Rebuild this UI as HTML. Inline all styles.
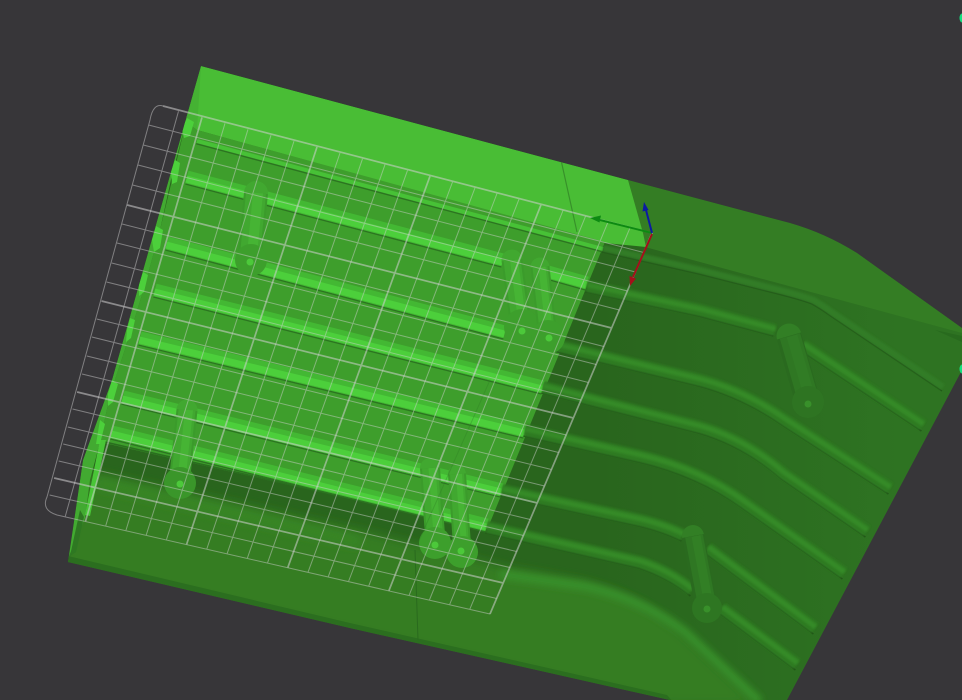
<!DOCTYPE html>
<html><head><meta charset="utf-8"><title>3D view</title>
<style>html,body{margin:0;padding:0;background:#373639;width:962px;height:700px;overflow:hidden}svg{display:block}</style>
</head><body>
<svg width="962" height="700" viewBox="0 0 962 700" xmlns="http://www.w3.org/2000/svg">
<defs>
<clipPath id="sil"><path d="M201 66L628 180L790 223Q825 233 857 253L962 328L962 370L787 700L670 700L350 628L68 562L83 460L112 380Z"/></clipPath>
<linearGradient id="floor" gradientUnits="userSpaceOnUse" x1="600" y1="0" x2="900" y2="0"><stop offset="0" stop-color="#29651d"/><stop offset="1" stop-color="#2e7322"/></linearGradient>
<filter id="b5" x="-20%" y="-20%" width="140%" height="140%"><feGaussianBlur stdDeviation="5"/></filter>
<filter id="b3" x="-20%" y="-20%" width="140%" height="140%"><feGaussianBlur stdDeviation="3.5"/></filter>
<filter id="b1" x="-5%" y="-5%" width="110%" height="110%"><feGaussianBlur stdDeviation="1"/></filter>
</defs>
<rect width="962" height="700" fill="#373639"/>
<g clip-path="url(#sil)">
<rect width="962" height="700" fill="url(#floor)"/>
<!-- bottom wall -->
<path d="M92 472L360 530L510 568L583 581Q640 595 680 632L758 705L670 705L60 565Z" fill="#347d24" filter="url(#b5)"/>
<path d="M500 574L583 586Q640 598 685 632L760 702" fill="none" stroke="#389029" stroke-width="9" filter="url(#b3)"/>
<path d="M96 482L360 542" fill="none" stroke="#378828" stroke-width="10" filter="url(#b5)"/>
<path d="M68 556L350 623L667 695L680 710L60 570Z" fill="#2b6e1f"/>
<!-- upper right band -->
<path d="M628 180L790 223Q825 233 857 253L962 328L962 333L700 262L645 247Z" fill="#347d24"/>
<path d="M935 330L962 336L962 342Z" fill="#286a1e"/>
<!-- top bright face -->
<path d="M201 66L628 180L643 233L646 247L605 243L197 130L186 118Z" fill="#49bd35"/>
<path d="M201 66L186 122L197 130Z" fill="#45b233"/>
<path d="M561 160L577 232" stroke="#37912a" stroke-width="1.2"/>
<!-- lit floor -->
<path d="M197 130L605 242L487 530L100 442L110 395L128 340L145 285L160 230L186 122Z" fill="#3e9e2c"/>
<path d="M105 442L487 530" stroke="#2a6e1f" stroke-width="1.5"/>
<!-- left wall -->
<path d="M201 66L186 122L172 175L160 230L145 285L128 340L110 395L100 442L90 480L85 518L69 556L83 460L112 380Z" fill="#42aa31"/>
<path d="M100 440L85 515L90 516L106 440Z" fill="#49c637"/>
<path d="M84 517L76 552L70 556L80 510Z" fill="#2e7822"/>
<path d="M187 118L194 122L190 136L184 138L182 128Z M175 160L180 163L177 182L172 184L171 172Z M156 226L163 230L160 248L154 252L152 240Z M143 272L148 275L144 292L139 296L139 285Z M130 318L135 320L131 338L126 342L127 330Z M112 380L118 384L113 402L108 406L108 394Z M100 420L105 424L100 444L96 444Z" fill="#4cd03b"/>
<!-- lit ribs -->
<g fill="none">
<path d="M197 141L603 249" stroke="#2c7421" stroke-width="1.3" transform="translate(-.8,2.8)"/>
<path d="M197 141L603 249" stroke="#47c136" stroke-width="4"/>
<g stroke="#2c7421" stroke-width="1.4" transform="translate(-1.6,7)">
<path d="M187 177L503 260M548 272L587 283"/><path d="M167 243L505 332"/><path d="M155 290L543 387"/><path d="M140 338L525 431"/><path d="M123 397L502 490"/><path d="M112 432L487 525"/>
</g>
<g stroke="#43b833" stroke-width="13">
<path d="M187 177L503 260M548 272L587 283"/><path d="M167 243L505 332"/><path d="M155 290L543 387"/><path d="M140 338L525 431"/><path d="M123 397L502 490"/><path d="M112 432L487 525"/>
</g>
<g stroke="#4ccf3b" stroke-width="7" transform="translate(-.6,2)">
<path d="M187 177L503 260M548 272L587 283"/><path d="M167 243L505 332"/><path d="M155 290L543 387"/><path d="M140 338L525 431"/><path d="M123 397L502 490"/><path d="M112 432L487 525"/>
</g>
</g>
<!-- dark ribs -->
<g fill="none">
<g stroke="#225619" stroke-width="1.5" transform="translate(-1.6,6)">
<path d="M587 286L700 310L775 330M803 345L923 425"/><path d="M555 345L700 380Q745 392 785 420L890 488"/><path d="M543 387L700 427Q745 440 783 473L867 531"/><path d="M525 430L640 456Q700 470 745 503L844 573"/><path d="M502 490L640 520Q665 526 683 535M708 548L815 628"/><path d="M487 527L640 562Q670 572 692 590M722 608L797 664"/>
</g>
<path d="M603 248L700 270L767 287Q800 295 813 300Q822 305 833 313L943 387" stroke="#225619" stroke-width="1.3" transform="translate(-1,4)"/>
<path d="M603 248L700 270L767 287Q800 295 813 300Q822 305 833 313L943 387" stroke="#317c25" stroke-width="6.5" filter="url(#b1)"/>
<g stroke="#2f7a24" stroke-width="12" filter="url(#b1)">
<path d="M587 286L700 310L775 330M803 345L923 425"/><path d="M555 345L700 380Q745 392 785 420L890 488"/><path d="M543 387L700 427Q745 440 783 473L867 531"/><path d="M525 430L640 456Q700 470 745 503L844 573"/><path d="M502 490L640 520Q665 526 683 535M708 548L815 628"/><path d="M487 527L640 562Q670 572 692 590M722 608L797 664"/>
</g>
<g stroke="#358a27" stroke-width="5" transform="translate(.5,-1)" filter="url(#b1)">
<path d="M587 286L700 310L775 330M803 345L923 425"/><path d="M555 345L700 380Q745 392 785 420L890 488"/><path d="M543 387L700 427Q745 440 783 473L867 531"/><path d="M525 430L640 456Q700 470 745 503L844 573"/><path d="M502 490L640 520Q665 526 683 535M708 548L815 628"/><path d="M487 527L640 562Q670 572 692 590M722 608L797 664"/>
</g>
</g>
<!-- lit pegs -->
<g fill="none">
<g>
<circle cx="256" cy="193" r="12" fill="#41a830"/>
<path d="M256 193L250 255" stroke="#3b9b2b" stroke-width="24"/><path d="M256 193L250 255" stroke="#41a830" stroke-width="20"/><path d="M258 193L252 255" stroke="#46b434" stroke-width="10"/>
<circle cx="251" cy="260" r="16" fill="#3d9f2c"/>
<circle cx="250" cy="262" r="3.5" fill="#4cc93a"/>
</g>
<g>
<circle cx="187" cy="410" r="10.5" fill="#41a830"/>
<path d="M187 410L180 475" stroke="#3b9b2b" stroke-width="21"/><path d="M187 410L180 475" stroke="#41a830" stroke-width="17"/><path d="M189 410L182 475" stroke="#46b434" stroke-width="8"/>
<circle cx="180" cy="483" r="16" fill="#3a962a"/>
<circle cx="180" cy="484" r="3.5" fill="#4cc93a"/>
</g>
<g>
<circle cx="512" cy="260" r="10.5" fill="#41a830"/>
<path d="M512 260L520 320" stroke="#3b9b2b" stroke-width="21"/><path d="M512 260L520 320" stroke="#41a830" stroke-width="17"/><path d="M514 260L522 320" stroke="#46b434" stroke-width="8"/>
<circle cx="522" cy="327" r="18" fill="#3d9f2c"/>
<circle cx="522" cy="331" r="3.5" fill="#4cc93a"/>
</g>
<g>
<circle cx="540" cy="267" r="9.5" fill="#41a830"/>
<path d="M540 267L547 330" stroke="#3b9b2b" stroke-width="19"/><path d="M540 267L547 330" stroke="#41a830" stroke-width="15"/><path d="M542 267L549 330" stroke="#46b434" stroke-width="7"/>
<circle cx="548" cy="337" r="17" fill="#3d9f2c"/>
<circle cx="549" cy="338" r="3.5" fill="#4cc93a"/>
</g>
<g>
<circle cx="430" cy="468" r="10" fill="#41a830"/>
<path d="M430 468L435 535" stroke="#3b9b2b" stroke-width="20"/><path d="M430 468L435 535" stroke="#41a830" stroke-width="16"/><path d="M432 468L437 535" stroke="#46b434" stroke-width="7"/>
<circle cx="435" cy="543" r="16" fill="#3d9f2c"/>
<circle cx="435" cy="545" r="3.5" fill="#4cc93a"/>
</g>
<g>
<circle cx="457" cy="474" r="9" fill="#41a830"/>
<path d="M457 474L462 545" stroke="#3b9b2b" stroke-width="18"/><path d="M457 474L462 545" stroke="#41a830" stroke-width="14"/><path d="M459 474L464 545" stroke="#46b434" stroke-width="6"/>
<circle cx="462" cy="552" r="16" fill="#3d9f2c"/>
<circle cx="461" cy="551" r="3.5" fill="#4cc93a"/>
</g>
<!-- dark pegs -->
<g>
<circle cx="789" cy="336" r="12.5" fill="#327f25"/>
<path d="M789 336L806 395" stroke="#2a6a1f" stroke-width="25"/><path d="M790 336L807 395" stroke="#2f7723" stroke-width="21"/><path d="M792 336L809 395" stroke="#317c25" stroke-width="11"/>
<circle cx="808" cy="402" r="16" fill="#2e7422"/>
<circle cx="808" cy="404" r="3.5" fill="#38902a"/>
</g>
<g>
<circle cx="693" cy="536" r="11" fill="#327f25"/>
<path d="M693 536L705 600" stroke="#2a6a1f" stroke-width="22"/><path d="M694 536L706 600" stroke="#2f7723" stroke-width="18"/><path d="M696 536L708 600" stroke="#327f25" stroke-width="9"/>
<circle cx="707" cy="608" r="15" fill="#2e7622"/>
<circle cx="707" cy="609" r="3.5" fill="#38902a"/>
</g>
</g>
<path d="M415 550L418 640" stroke="#2a6a1e" stroke-width="1"/>
<path d="M490 380L415 550" stroke="#2f7d24" stroke-width="1" opacity=".35"/>
</g>
<!-- grid -->
<g fill="none" stroke="#d0d0d0">
<g stroke-width="1" opacity=".48">
<path d="M163 106Q153 103 150 120L47 497Q41 510 57 515L490 614"/>
<path d="M148.6 125L643.7 252.5M143.3 145L635.4 272M138 165L627.4 291M132.6 185L619.3 310M122.1 224L603.8 346.5M117 243L596.1 364.5M111.7 263L588.5 382.5M106.6 282L581 400M96.7 319L566.2 435M91.9 337L558.7 452.5M86.8 356L551.5 469.5M82 374L544.5 486M72.6 409L530.2 519.5M67.8 427L523.4 535.5M63.2 444L516.6 551.5M58.7 461L509.8 567.5M49.6 495L496.7 598.5"/>
<path d="M178.5 111.3L65.2 516.6M225 123.3L105.7 525.9M248 129.3L125.9 530.5M271 135.2L146.2 535.2M294 141.1L166.4 539.8M340 153L206.8 549M362.5 158.8L227.1 553.7M385 164.6L247.3 558.3M407.5 170.4L267.5 562.9M452.5 182L308 572.2M475 187.8L328.2 576.8M497 193.5L348.5 581.5M519 199.2L368.7 586.1M563 210.5L409.1 595.3M585.5 216.3L429.4 600M608 222.1L449.6 604.6M630 227.8L469.8 609.2"/>
</g>
<g stroke-width="1.7" opacity=".55">
<path d="M163 106L652 233L490 614"/>
<path d="M127.2 205L611.6 328M101.5 301L573.4 418M77.1 392L537.3 503M54.1 478L503.3 583"/>
<path d="M202 117.4L85.5 521.3M317 147L186.6 544.4M430 176.2L287.8 567.6M541 204.8L388.9 590.7"/>
</g>
</g>
<!-- gizmo -->
<path d="M652 233L600 220" stroke="#0d8a12" stroke-width="2"/>
<path d="M590 218L601 215.5L599.5 222.5Z" fill="#0d8a12"/>
<path d="M652 233L646 210" stroke="#0b1aa3" stroke-width="2"/>
<path d="M644 202L648.5 210L642.5 211.5Z" fill="#0b1aa3"/>
<path d="M652 234L633 277" stroke="#a3101a" stroke-width="2"/>
<path d="M630 286L629.5 276L636 278.5Z" fill="#a3101a"/>
<!-- edge markers -->
<ellipse cx="962" cy="18" rx="2.5" ry="4.5" fill="#14e07f"/>
<ellipse cx="962" cy="369" rx="2.5" ry="4.5" fill="#14e07f"/>
</svg>
</body></html>
